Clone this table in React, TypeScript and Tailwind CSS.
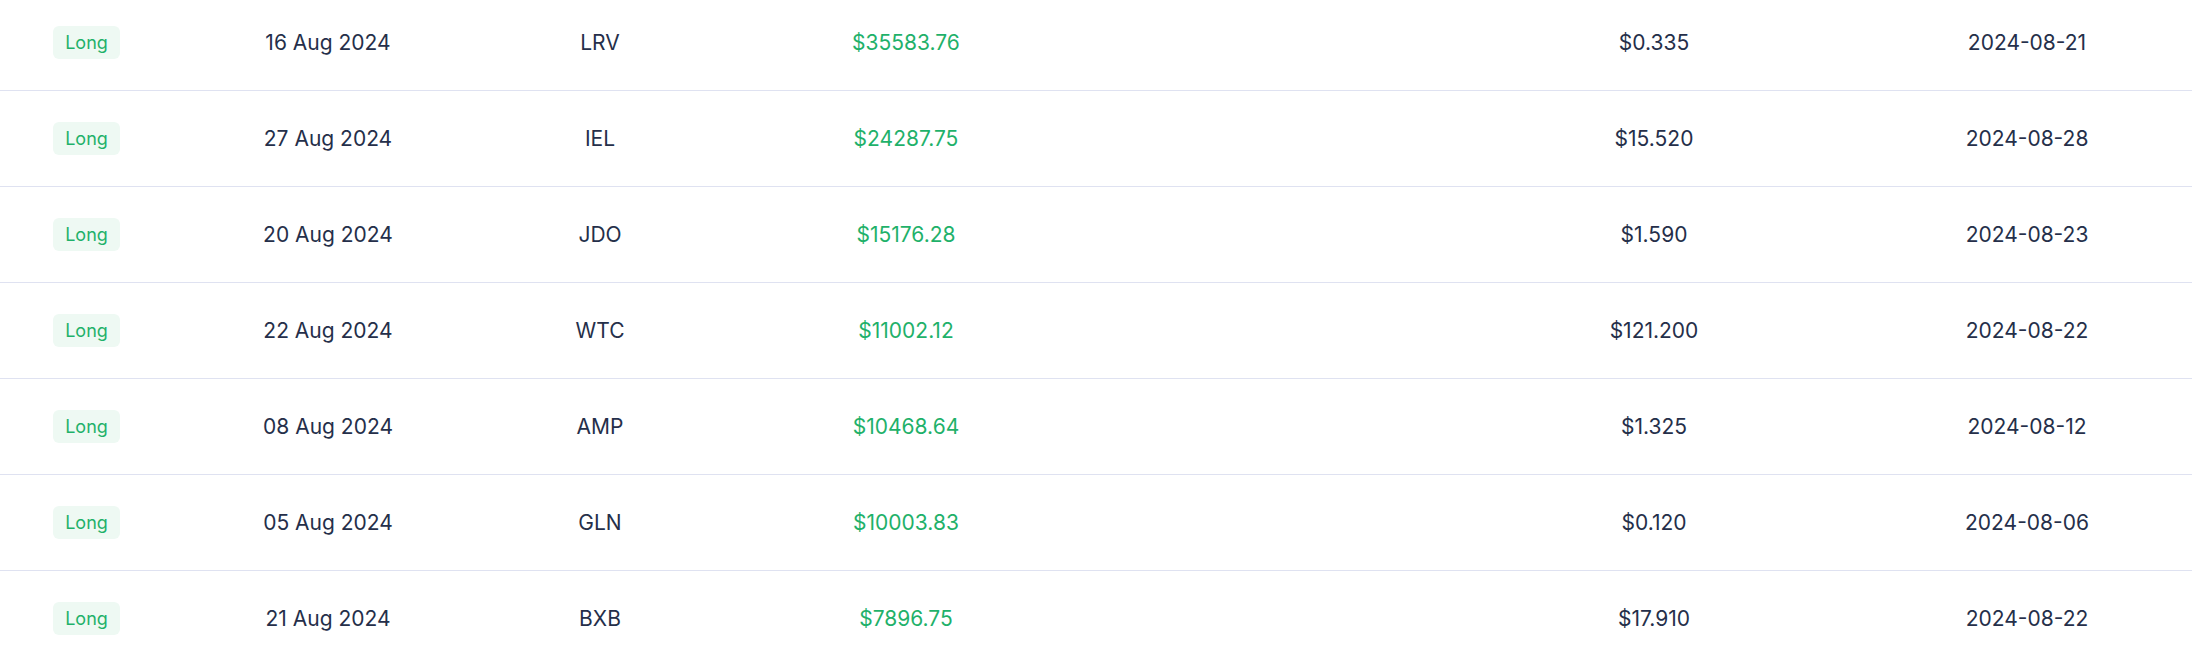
import React from "react";

type Row = { date: string; sym: string; amount: string; price: string; exp: string };

const rows: Row[] = [
  { date: "16 Aug 2024", sym: "LRV", amount: "$35583.76", price: "$0.335", exp: "2024-08-21" },
  { date: "27 Aug 2024", sym: "IEL", amount: "$24287.75", price: "$15.520", exp: "2024-08-28" },
  { date: "20 Aug 2024", sym: "JDO", amount: "$15176.28", price: "$1.590", exp: "2024-08-23" },
  { date: "22 Aug 2024", sym: "WTC", amount: "$11002.12", price: "$121.200", exp: "2024-08-22" },
  { date: "08 Aug 2024", sym: "AMP", amount: "$10468.64", price: "$1.325", exp: "2024-08-12" },
  { date: "05 Aug 2024", sym: "GLN", amount: "$10003.83", price: "$0.120", exp: "2024-08-06" },
  { date: "21 Aug 2024", sym: "BXB", amount: "$7896.75", price: "$17.910", exp: "2024-08-22" },
];

export default function App() {
  return (
    <div
      className="w-[2192px] h-[657px] overflow-hidden bg-white"
      style={{ fontFamily: "Inter, 'Noto Sans', sans-serif" }}
    >
      <div className="mt-[-5px] flex flex-col">
        {rows.map((r, i) => (
          <div
            key={i}
            className="grid grid-cols-[200px_256px_288px_324px_352px_468px_278px_1fr] items-center h-[96px] border-b border-[#dfe2f1] text-[21px] text-[#252f4a]"
          >
            <div className="pl-[53px]">
              <span className="inline-flex items-center justify-center w-[67px] h-[33px] rounded-[6px] bg-[#eef9f3] text-[#1fb16a] text-[18px]">
                Long
              </span>
            </div>
            <div className="text-center">{r.date}</div>
            <div className="text-center">{r.sym}</div>
            <div className="text-center text-[#1fb16a]">{r.amount}</div>
            <div></div>
            <div className="text-center">{r.price}</div>
            <div className="text-center">{r.exp}</div>
            <div></div>
          </div>
        ))}
      </div>
    </div>
  );
}
